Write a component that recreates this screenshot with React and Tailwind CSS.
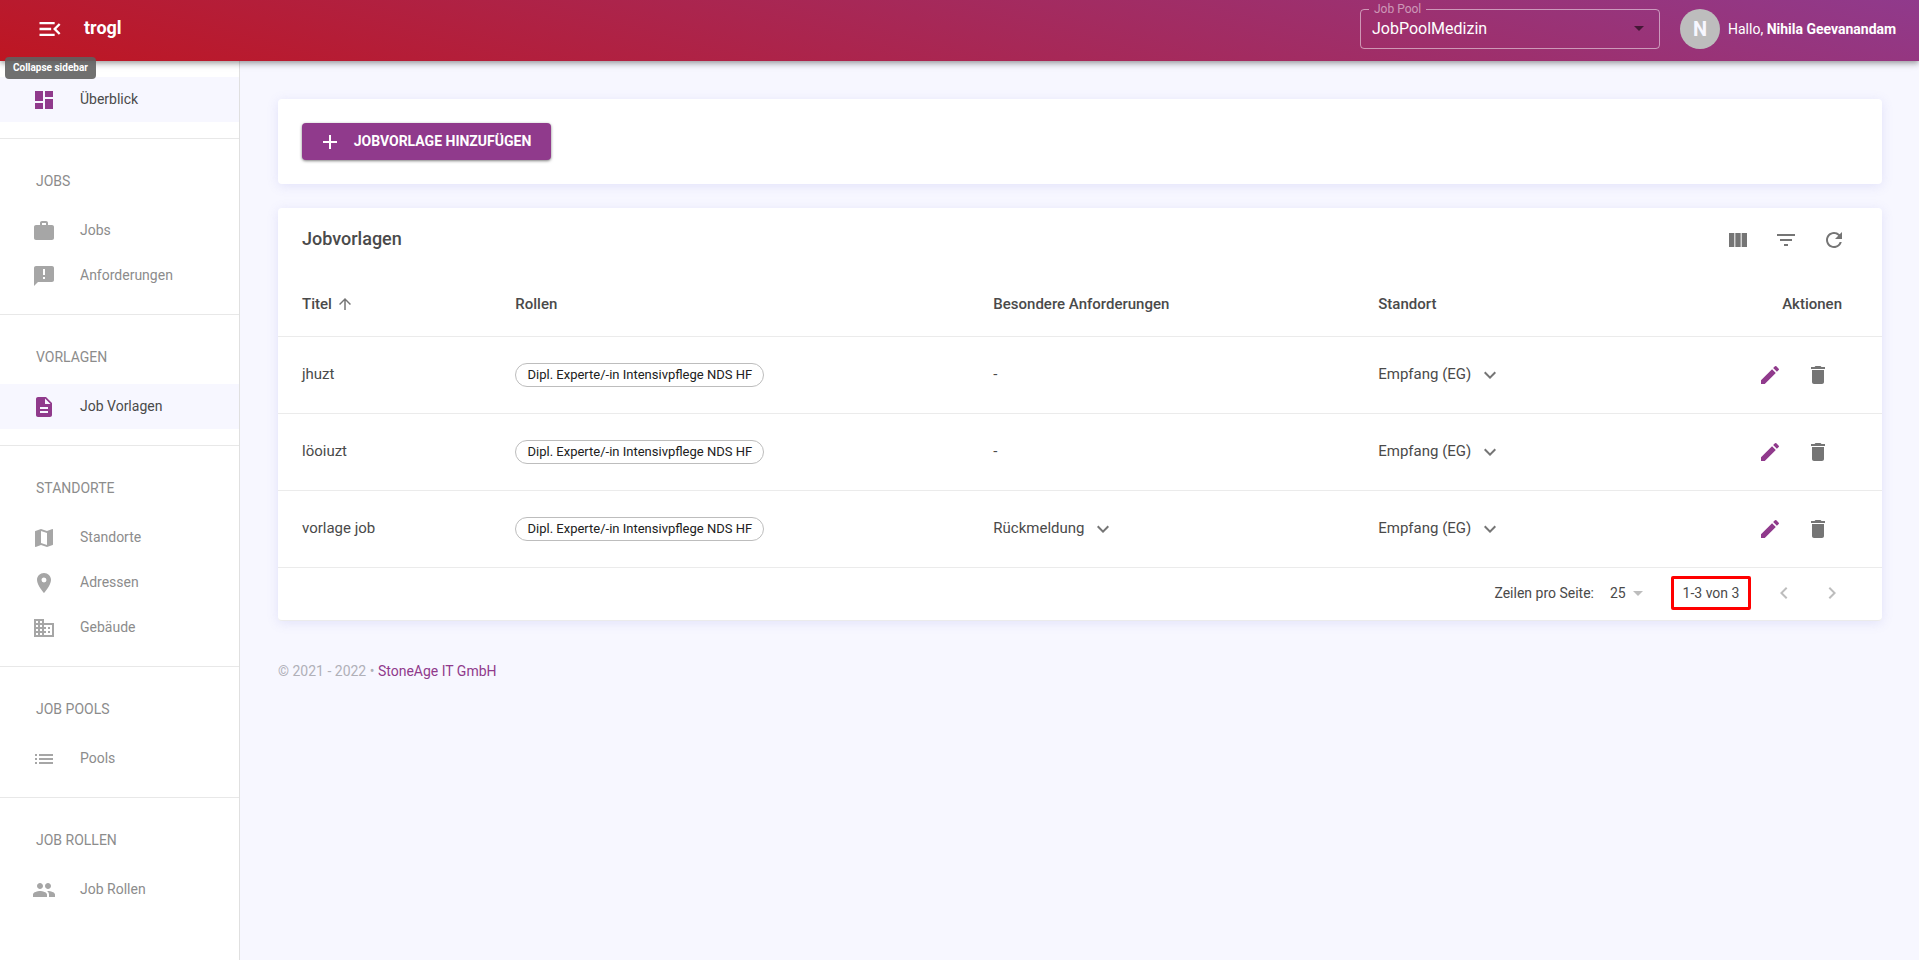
import React, { useState } from "react";
import {
    MdAdd,
    MdAnnouncement,
    MdArrowDropDown,
    MdArrowUpward,
    MdBusiness,
    MdChevronLeft,
    MdChevronRight,
    MdDashboard,
    MdDelete,
    MdDescription,
    MdEdit,
    MdExpandMore,
    MdFilterList,
    MdList,
    MdLocationOn,
    MdMap,
    MdMenuOpen,
    MdPeople,
    MdRefresh,
    MdViewColumn,
    MdWork,
} from "react-icons/md";

const navGroups = [
    { title: null, items: [{ label: "Überblick", icon: MdDashboard, active: true }] },
    {
        title: "Jobs",
        items: [
            { label: "Jobs", icon: MdWork },
            { label: "Anforderungen", icon: MdAnnouncement },
        ],
    },
    { title: "Vorlagen", items: [{ label: "Job Vorlagen", icon: MdDescription, active: true }] },
    {
        title: "Standorte",
        items: [
            { label: "Standorte", icon: MdMap },
            { label: "Adressen", icon: MdLocationOn },
            { label: "Gebäude", icon: MdBusiness },
        ],
    },
    { title: "Job Pools", items: [{ label: "Pools", icon: MdList }] },
    { title: "Job Rollen", items: [{ label: "Job Rollen", icon: MdPeople }] },
];

const templates = [
    { id: 1, title: "jhuzt", role: "Dipl. Experte/-in Intensivpflege NDS HF", requirement: null, location: "Empfang (EG)" },
    { id: 2, title: "löoiuzt", role: "Dipl. Experte/-in Intensivpflege NDS HF", requirement: null, location: "Empfang (EG)" },
    { id: 3, title: "vorlage job", role: "Dipl. Experte/-in Intensivpflege NDS HF", requirement: "Rückmeldung", location: "Empfang (EG)" },
];

const IconButton = ({ label, children, className = "text-[#757575]", ...props }) => (
    <button type="button" aria-label={label} className={`flex size-12 items-center justify-center rounded-full ${className}`} {...props}>
        {children}
    </button>
);

const Header = () => (
    <header className="relative z-20 flex h-[61px] items-center bg-[linear-gradient(15deg,#be1622,#903a8c)] pr-4 pb-1 pl-9 text-white shadow-[0_2px_4px_-1px_rgba(0,0,0,0.2),0_4px_5px_0_rgba(0,0,0,0.14),0_1px_10px_0_rgba(0,0,0,0.12)]">
        <div className="relative flex">
            <button type="button" aria-describedby="sidebar-tip" aria-label="Collapse sidebar">
                <MdMenuOpen size={28} />
            </button>
            <div
                id="sidebar-tip"
                role="tooltip"
                className="absolute top-[42px] left-[-31px] rounded bg-[#616161]/90 px-2 py-1 text-[10px] leading-[14px] font-bold whitespace-nowrap"
            >
                Collapse sidebar
            </div>
        </div>
        <span className="ml-5 pb-0.5 text-lg font-bold">trogl</span>
        <fieldset className="relative mb-[7px] ml-auto h-12 w-[300px] rounded border border-white/50">
            <legend className="ml-2 h-4 px-[5px] text-xs leading-4 text-white/50">
                <label htmlFor="job-pool">Job Pool</label>
            </legend>
            <select id="job-pool" className="block h-6 w-full appearance-none bg-transparent pr-8 pl-[11px] text-base">
                <option>JobPoolMedizin</option>
            </select>
            <MdArrowDropDown size={24} className="pointer-events-none absolute right-2 bottom-2 text-black/55" />
        </fieldset>
        <div className="ml-5 flex size-10 items-center justify-center rounded-full bg-[#bdbdbd] text-xl font-bold text-[#f7f7ff]">N</div>
        <p className="ml-2 min-w-[175px] text-sm">
            Hallo, <b>Nihila Geevanandam</b>
        </p>
    </header>
);

const Sidebar = () => (
    <nav className="w-60 shrink-0 divide-y divide-[#e8e8e8] border-r border-[#e0e0e0] bg-white">
        {navGroups.map((group) => (
            <div key={group.title || "home"} className="py-4">
                {group.title && (
                    <h2 className="pl-9 text-sm leading-[53px] text-[#8c8c8c] uppercase">{group.title}</h2>
                )}
                {group.items.map(({ label, icon: Icon, active }) => (
                    <a
                        key={label}
                        href="#"
                        className={`flex h-[45px] items-center gap-6 pl-8 text-sm ${active ? "bg-[#f7f7ff] text-[#4a4a4a]" : "text-[#8c8c8c]"}`}
                    >
                        <Icon size={24} className={active ? "text-[#903a8c]" : "text-[#a6a6a6]"} />
                        <span className="pb-0.5">{label}</span>
                    </a>
                ))}
            </div>
        ))}
    </nav>
);

const Expandable = ({ text }) => (
    <button type="button" className="flex items-center gap-[7px]">
        {text}
        <MdExpandMore size={24} className="text-[#757575]" />
    </button>
);

const TemplateTable = () => {
    const [sortAsc, setSortAsc] = useState(true);
    const rows = [...templates].sort((a, b) => (sortAsc ? a.id - b.id : b.id - a.id));

    return (
        <section className="mt-6 rounded bg-white shadow-[0_2px_12px_0_rgba(120,120,220,0.16)]">
            <div className="flex h-16 items-center justify-between px-6">
                <h1 className="pb-0.5 text-lg font-medium">Jobvorlagen</h1>
                <div className="flex">
                    <IconButton label="Spalten">
                        <MdViewColumn size={24} />
                    </IconButton>
                    <IconButton label="Filter">
                        <MdFilterList size={24} />
                    </IconButton>
                    <IconButton label="Aktualisieren">
                        <MdRefresh size={24} />
                    </IconButton>
                </div>
            </div>
            <table className="w-full table-fixed text-left text-[15px]">
                <thead>
                    <tr className="h-16 border-b border-[#ebebeb]">
                        <th className="w-[13.3%] pl-6 font-medium">
                            <button type="button" className="flex items-center gap-1" onClick={() => setSortAsc(!sortAsc)}>
                                Titel
                                <MdArrowUpward size={18} className={sortAsc ? "text-[#757575]" : "rotate-180 text-[#757575]"} />
                            </button>
                        </th>
                        <th className="w-[29.8%] pl-6 font-medium">Rollen</th>
                        <th className="w-[24%] pl-6 font-medium">Besondere Anforderungen</th>
                        <th className="pl-6 font-medium">Standort</th>
                        <th className="w-[13%] pr-10 text-right font-medium">Aktionen</th>
                    </tr>
                </thead>
                <tbody>
                    {rows.map((row) => (
                        <tr key={row.id} className="h-[77px] border-b border-[#ebebeb]">
                            <td className="pl-6">{row.title}</td>
                            <td className="pl-6">
                                <span className="inline-flex h-6 min-w-[249px] items-center justify-center rounded-full border border-[#bdbdbd] px-2 text-[13px] whitespace-nowrap text-[#212121]">
                                    {row.role}
                                </span>
                            </td>
                            <td className="pl-6">{row.requirement ? <Expandable text={row.requirement} /> : "-"}</td>
                            <td className="pl-6">
                                <Expandable text={row.location} />
                            </td>
                            <td className="pr-10">
                                <div className="flex justify-end">
                                    <IconButton label="Bearbeiten" className="text-[#903a8c]">
                                        <MdEdit size={24} />
                                    </IconButton>
                                    <IconButton label="Löschen">
                                        <MdDelete size={24} />
                                    </IconButton>
                                </div>
                            </td>
                        </tr>
                    ))}
                </tbody>
            </table>
            <div className="flex h-[53px] items-center justify-end rounded-b border-b border-[#ebebeb] pr-[26px] pb-0.5 text-sm">
                <label htmlFor="page-size">Zeilen pro Seite:</label>
                <div className="relative ml-4">
                    <select id="page-size" className="block h-6 w-10 appearance-none bg-transparent">
                        <option>25</option>
                        <option>50</option>
                    </select>
                    <MdArrowDropDown size={24} className="pointer-events-none absolute top-0 right-0 text-[#bdbdbd]" />
                </div>
                <span className="mr-[9px] ml-[21px] min-w-20 rounded-xs border-3 border-[#ff0000] px-2 py-1 text-center">1-3 von 3</span>
                <IconButton label="Vorherige Seite" className="text-[#bdbdbd]" disabled>
                    <MdChevronLeft size={24} />
                </IconButton>
                <IconButton label="Nächste Seite" className="text-[#bdbdbd]" disabled>
                    <MdChevronRight size={24} />
                </IconButton>
            </div>
        </section>
    );
};

const App = () => (
    <div className="flex min-h-screen flex-col bg-[#f7f7ff] font-[Roboto,sans-serif] text-[#4a4a4a]">
        <Header />
        <div className="flex grow">
            <Sidebar />
            <main className="min-w-0 grow py-[38px] pr-[37px] pl-[38px]">
                <section className="rounded bg-white p-6 shadow-[0_2px_12px_0_rgba(120,120,220,0.16)]">
                    <button
                        type="button"
                        className="flex h-[37px] min-w-[249px] items-center gap-2 rounded bg-[#903a8c] px-4 text-sm font-bold text-white uppercase shadow-[0_1px_3px_rgba(0,0,0,0.5)]"
                    >
                        <MdAdd size={24} />
                        <span className="grow pb-0.5">Jobvorlage hinzufügen</span>
                    </button>
                </section>
                <TemplateTable />
                <footer className="mt-10 text-sm text-[#b0b0b8]">
                    © 2021 - 2022 •{" "}
                    <a href="#" className="text-[#903a8c]">
                        StoneAge IT GmbH
                    </a>
                </footer>
            </main>
        </div>
    </div>
);

export default App;
